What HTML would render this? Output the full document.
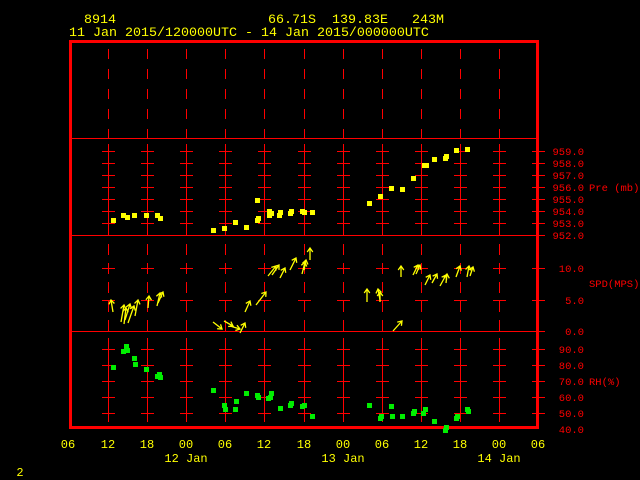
<!DOCTYPE html>
<html><head><meta charset="utf-8"><style>
html,body{margin:0;padding:0;background:#000;width:640px;height:480px;overflow:hidden}
svg{display:block}
text{font-family:"Liberation Mono",monospace;white-space:pre}
</style></head><body>
<svg width="640" height="480" viewBox="0 0 640 480" xmlns="http://www.w3.org/2000/svg" shape-rendering="crispEdges">
<rect width="640" height="480" fill="#000"/>
<g fill="#ffff00" font-size="13.33">
<text x="84" y="23" xml:space="preserve">8914</text>
<text x="268" y="23" xml:space="preserve">66.71S  139.83E   243M</text>
<text x="69" y="36" xml:space="preserve">11 Jan 2015/120000UTC - 14 Jan 2015/000000UTC</text>
</g>
<g id="grid" stroke="#ff0000" stroke-width="1" fill="none">
<line x1="70" y1="138.5" x2="538" y2="138.5"/>
<line x1="70" y1="235.5" x2="538" y2="235.5"/>
<line x1="70" y1="331.5" x2="538" y2="331.5"/>
</g>
<g stroke="#ff0000" stroke-width="1" fill="none" id="cols"></g>
<g fill="none" stroke="#ff0000" stroke-width="3">
<rect x="70.5" y="41.5" width="467" height="386"/>
</g>
<g id="pre" fill="#ffff00"></g>
<g id="rh" fill="#00ee00"></g>
<g id="wind" stroke="#ffff00" stroke-width="1.3" fill="none" shape-rendering="auto"></g>
<g fill="#ff0000" font-size="10.5" text-anchor="end">
<text x="584" y="155">959.0</text><text x="584" y="167">958.0</text><text x="584" y="179">957.0</text><text x="584" y="191">956.0</text><text x="584" y="203">955.0</text><text x="584" y="215">954.0</text><text x="584" y="227">953.0</text><text x="584" y="239">952.0</text>
<text x="584" y="272">10.0</text><text x="584" y="304">5.0</text><text x="584" y="335">0.0</text>
<text x="584" y="353">90.0</text><text x="584" y="369">80.0</text><text x="584" y="385">70.0</text><text x="584" y="401">60.0</text><text x="584" y="417">50.0</text><text x="584" y="433">40.0</text>
</g>
<g fill="#ff0000" font-size="10.5">
<text x="589" y="191">Pre (mb)</text>
<text x="589" y="287">SPD(MPS)</text>
<text x="589" y="385">RH(%)</text>
</g>
<g fill="#ffff00" font-size="12" text-anchor="middle">
<text x="68" y="448">06</text><text x="108" y="448">12</text><text x="147" y="448">18</text><text x="186" y="448">00</text><text x="225" y="448">06</text><text x="264" y="448">12</text><text x="304" y="448">18</text><text x="343" y="448">00</text><text x="382" y="448">06</text><text x="421" y="448">12</text><text x="460" y="448">18</text><text x="499" y="448">00</text><text x="538" y="448">06</text>
<text x="186" y="462">12 Jan</text><text x="343" y="462">13 Jan</text><text x="499" y="462">14 Jan</text>
<text x="20" y="476">2</text>
</g>
<script>
var NS="http://www.w3.org/2000/svg";
function el(p,t,a){var e=document.createElementNS(NS,t);for(var k in a)e.setAttribute(k,a[k]);p.appendChild(e);return e;}
var cols=document.getElementById("cols");
var xs=[108,147,186,225,264,304,343,382,421,460,499,538];
var ticks=[151,163,175,187,199,211,223,235,268,300,331,349,365,381,397,413];
xs.forEach(function(x){
 var X=x+0.5;
 el(cols,"line",{x1:X,y1:49,x2:X,y2:138,"stroke-dasharray":"10 10"});
 el(cols,"line",{x1:X,y1:144,x2:X,y2:235});
 el(cols,"line",{x1:X,y1:244,x2:X,y2:331,"stroke-dasharray":"11 8"});
 el(cols,"line",{x1:X,y1:338,x2:X,y2:422});
 ticks.forEach(function(y){el(cols,"line",{x1:x-6,y1:y+0.5,x2:x+7,y2:y+0.5});});
});
var pre=[[113,220],[123,215],[127,217],[134,215],[146,215],[157,215],[160,218],[213,230],[224,228],[235,222],[246,227],[257,200],[257,220],[258,218],[269,215],[269,211],[271,213],[279,215],[280,212],[290,213],[291,211],[302,211],[304,212],[312,212],[369,203],[380,196],[391,188],[402,189],[413,178],[424,165],[426,165],[434,159],[445,158],[446,156],[456,150],[467,149]];
var g=document.getElementById("pre");
pre.forEach(function(p){el(g,"rect",{x:p[0]-2,y:p[1]-2,width:5,height:5});});
var rh=[[113,367],[123,351],[126,346],[127,350],[134,358],[135,364],[146,369],[157,376],[159,374],[160,377],[213,390],[224,405],[225,409],[236,401],[235,409],[246,393],[257,395],[258,397],[268,398],[270,397],[271,393],[280,408],[290,405],[291,403],[302,406],[304,405],[312,416],[369,405],[380,418],[381,416],[391,406],[392,416],[402,416],[413,413],[414,411],[423,413],[425,409],[434,421],[445,430],[446,427],[456,418],[457,416],[467,409],[468,411]];
g=document.getElementById("rh");
rh.forEach(function(p){el(g,"rect",{x:p[0]-2,y:p[1]-2,width:5,height:5});});
var w=[[113,312,111,300],[121,322,124,305],[124,324,126,308],[125,320,130,304],[128,323,134,306],[135,316,138,300],[148,308,149,296],[157,306,160,293],[158,303,163,292],
[213,322,222,329],[224,321,233,326],[230,326,240,329],[240,333,245,323],[245,312,250,301],[256,305,266,292],
[268,276,276,266],[272,275,279,265],[280,278,285,268],[290,270,296,258],[302,274,305,262],[304,270,306,260],[310,260,310,248],
[367,302,367,289],[380,300,378,289],[380,302,380,292],[393,331,402,321],[401,277,401,266],[413,275,418,265],[416,274,420,265],[425,285,430,275],[432,283,437,274],[440,286,446,275],[446,283,447,274],[456,277,460,266],[467,277,469,266],[470,276,473,267]];
g=document.getElementById("wind");
w.forEach(function(a){
 var x1=a[0],y1=a[1],x2=a[2],y2=a[3];
 el(g,"line",{x1:x1,y1:y1,x2:x2,y2:y2});
 var dx=x2-x1,dy=y2-y1,L=Math.sqrt(dx*dx+dy*dy);dx/=L;dy/=L;
 var s=4;
 var ax=x2-s*dx, ay=y2-s*dy;
 el(g,"polyline",{points:(ax-s*0.7*dy)+","+(ay+s*0.7*dx)+" "+x2+","+y2+" "+(ax+s*0.7*dy)+","+(ay-s*0.7*dx)});
});
</script>
</svg>
</body></html>
